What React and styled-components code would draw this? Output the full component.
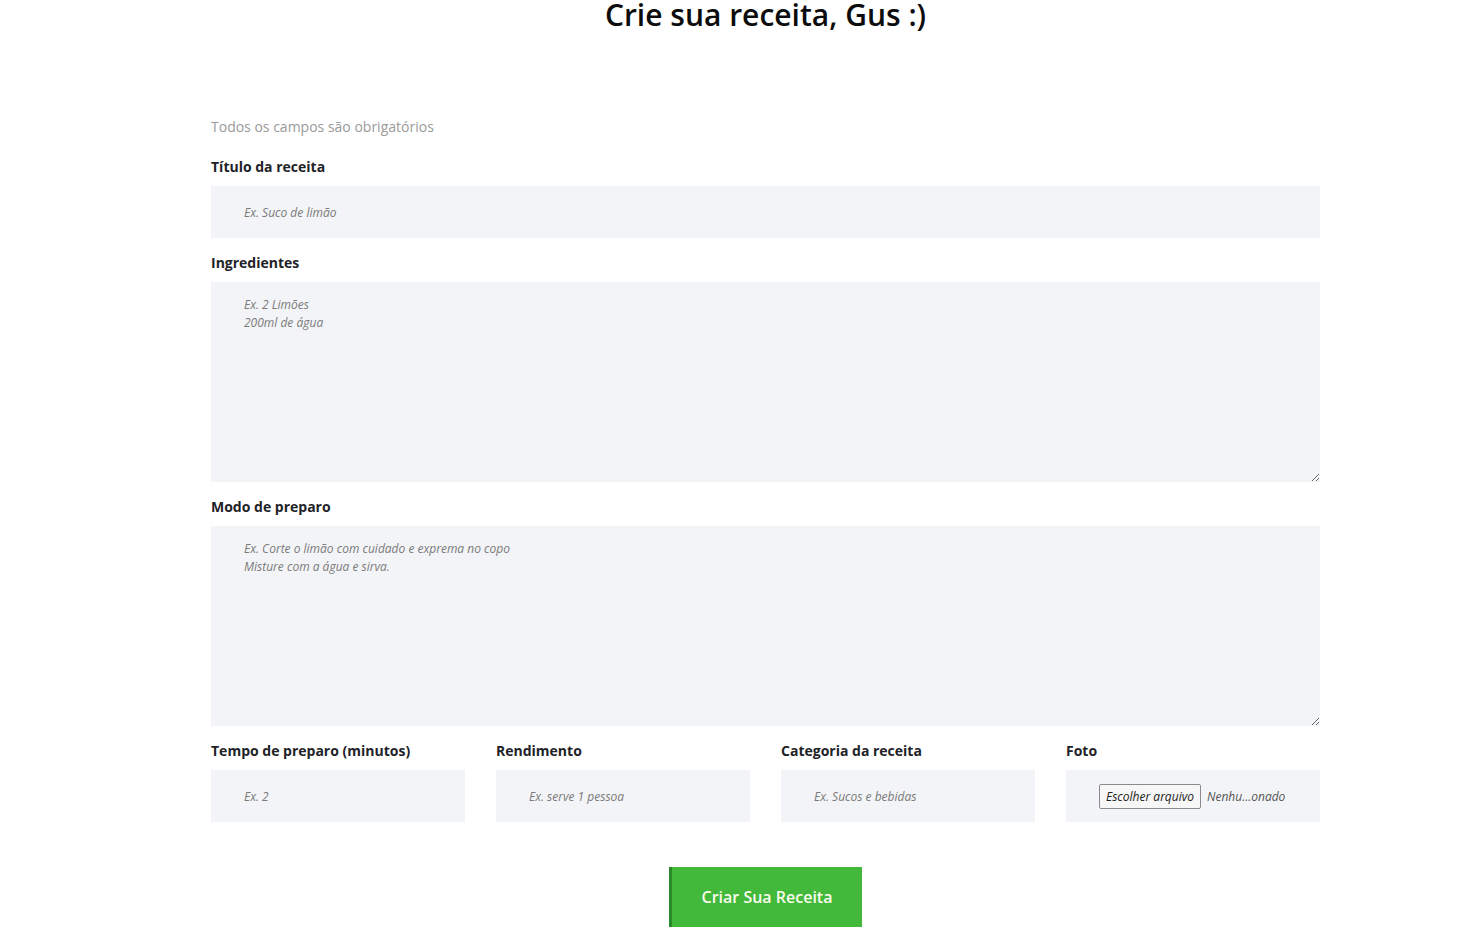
import styled, { createGlobalStyle } from "styled-components";

const GlobalStyle = createGlobalStyle`
    body {
        margin: 0;
        background: #ffffff;
        font-family: 'Open Sans', 'Noto Sans', sans-serif;
        color: #1e2328;
    }
`;

const App = () => {
    return (
        <>
            <GlobalStyle />
            <Page>
                <Title>Crie sua receita, Gus :)</Title>
                <Form>
                    <Required>Todos os campos são obrigatórios</Required>
                    <Field>
                        <Label>Título da receita</Label>
                        <Input placeholder="Ex. Suco de limão" />
                    </Field>
                    <Field>
                        <Label>Ingredientes</Label>
                        <TextArea placeholder={"Ex. 2 Limões\n200ml de água"} />
                    </Field>
                    <Field>
                        <Label>Modo de preparo</Label>
                        <TextArea placeholder={"Ex. Corte o limão com cuidado e exprema no copo\nMisture com a água e sirva."} />
                    </Field>
                    <Row>
                        <Field>
                            <Label>Tempo de preparo (minutos)</Label>
                            <Input placeholder="Ex. 2" />
                        </Field>
                        <Field>
                            <Label>Rendimento</Label>
                            <Input placeholder="Ex. serve 1 pessoa" />
                        </Field>
                        <Field>
                            <Label>Categoria da receita</Label>
                            <Input placeholder="Ex. Sucos e bebidas" />
                        </Field>
                        <Field>
                            <Label>Foto</Label>
                            <FileBox>
                                <FileButton>Escolher arquivo</FileButton>
                                <FileName>Nenhu...onado</FileName>
                            </FileBox>
                        </Field>
                    </Row>
                    <Submit type="button">Criar Sua Receita</Submit>
                </Form>
            </Page>
        </>
    );
};

const Page = styled.div`
    width: 1109px;
    margin-left: 211px;
    padding-bottom: 40px;
`;

const Title = styled.h1`
    margin: -3px 0 0;
    text-align: center;
    font-size: 30px;
    line-height: 36px;
    font-weight: 600;
    color: #0c0c0c;
`;

const Form = styled.form`
    display: flex;
    flex-direction: column;
    margin-top: 84px;
`;

const Required = styled.p`
    margin: 0 0 20px;
    font-size: 14px;
    line-height: 20px;
    color: #9a9a9a;
`;

const Field = styled.div`
    display: flex;
    flex-direction: column;
    margin-bottom: 15px;
    min-width: 0;
`;

const Label = styled.label`
    font-size: 14px;
    line-height: 20px;
    font-weight: 700;
    color: #1e2328;
    margin-bottom: 9px;
`;

const fieldBase = `
    box-sizing: border-box;
    width: 100%;
    border: none;
    outline: none;
    background: #f3f4f7;
    font-family: 'Open Sans', 'Noto Sans', sans-serif;
    font-size: 12px;
    font-style: italic;
    color: #444;

    &::placeholder {
        font-style: italic;
        color: #7a7a7a;
    }
`;

const Input = styled.input`
    ${fieldBase}
    height: 52px;
    padding: 0 20px 0 33px;
`;

const TextArea = styled.textarea`
    ${fieldBase}
    display: block;
    height: 200px;
    padding: 14px 20px 0 33px;
    line-height: 18px;
    resize: vertical;
`;

const Row = styled.div`
    display: grid;
    grid-template-columns: repeat(4, 254px);
    column-gap: 31px;
`;

const FileBox = styled.div`
    box-sizing: border-box;
    height: 52px;
    background: #f3f4f7;
    display: flex;
    align-items: center;
    padding-left: 33px;
    gap: 6px;
`;

const FileButton = styled.span`
    display: inline-flex;
    align-items: center;
    height: 23px;
    padding: 0 6px;
    border: 1px solid #8a8a8a;
    border-radius: 2px;
    background: #f7f7f7;
    font-size: 12px;
    font-style: italic;
    color: #222;
`;

const FileName = styled.span`
    font-size: 12px;
    font-style: italic;
    color: #555;
`;

const Submit = styled.button`
    align-self: center;
    margin-top: 30px;
    width: 193px;
    height: 60px;
    border: none;
    border-left: 3px solid #2b8a27;
    background: #42b93a;
    color: #fbfbee;
    font-family: 'Open Sans', 'Noto Sans', sans-serif;
    font-size: 16px;
    font-weight: 600;
    cursor: pointer;
`;

export default App;
